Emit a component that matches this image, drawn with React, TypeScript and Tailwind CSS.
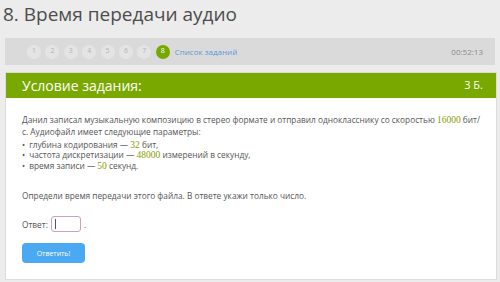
import React from "react";

const font = { fontFamily: '"Open Sans", "Noto Sans", sans-serif' };

function Num({ children }: { children: React.ReactNode }) {
  return <span className="font-['Liberation_Serif',serif] text-[9.5px] leading-none text-[#8a9c00]">{children}</span>;
}

export default function App() {
  const steps = [1, 2, 3, 4, 5, 6, 7];
  return (
    <div className="h-[282px] w-[500px] overflow-hidden bg-[#ececec] font-['Open_Sans',sans-serif] text-[#555]">
      <h1 className="pl-[3px] pt-[1px] text-[19px] leading-[26px] text-[#4d4d4d]">8. Время передачи аудио</h1>

      <div className="mx-[5px] mt-[11px] flex h-[27px] items-center bg-[#dadada] pl-[22px] pr-[12px]">
        <div className="flex items-center gap-[4.4px]">
          {steps.map((n) => (
            <span
              key={n}
              className="flex h-[14px] w-[14px] items-center justify-center rounded-full bg-[#e4e4e4] text-[7px] text-[#b5b5b5]"
            >
              {n}
            </span>
          ))}
          <span className="flex h-[14px] w-[14px] items-center justify-center rounded-full bg-[#76a800] text-[7px] text-white">
            8
          </span>
        </div>
        <span className="ml-[5px] text-[8px] text-[#5b9bd8]">Список заданий</span>
        <span className="ml-auto text-[8px] text-[#8a8a8a]">00:52:13</span>
      </div>

      <div className="mx-[5px] mt-[7px] mr-[3px] border border-[#dcdcdc] bg-white">
        <div className="flex h-[25px] items-center bg-[#79a900] pl-[16px] pr-[13px] text-white">
          <span className="text-[14px]">Условие задания:</span>
          <span className="ml-auto text-[11px]">3 Б.</span>
        </div>
        <div className="h-[181px] pl-[16px] pr-[10px] pt-[16px] text-[8.3px] leading-[11px] text-[#555]" style={font}>
          <p>
            Данил записал музыкальную композицию в стерео формате и отправил однокласснику со скоростью <Num>16000</Num>&nbsp;бит/
            <br />
            с. Аудиофайл имеет следующие параметры:
          </p>
          <ul className="mt-[3px] leading-[9px]">
            <li className="flex gap-[4px]">
              <span>•</span>
              <span>
                глубина кодирования — <Num>32</Num> бит,
              </span>
            </li>
            <li className="flex gap-[4px]">
              <span>•</span>
              <span>
                частота дискретизации — <Num>48000</Num> измерений в секунду,
              </span>
            </li>
            <li className="flex gap-[4px]">
              <span>•</span>
              <span>
                время записи — <Num>50</Num> секунд.
              </span>
            </li>
          </ul>
          <p className="mt-[19px]">Определи время передачи этого файла. В ответе укажи только число.</p>
          <div className="mt-[15px] flex items-center gap-[3px]">
            <span>Ответ:</span>
            <span className="flex h-[16px] w-[30px] items-center rounded-[3px] border border-[#c9a3c0] pl-[3px]">
              <span className="h-[10px] w-px bg-[#555]" />
            </span>
            <span>.</span>
          </div>
          <button className="mt-[11px] flex h-[20px] w-[63px] items-center justify-center rounded-[4px] bg-[#4aa9f0] text-[7px] text-white">
            Ответить!
          </button>
        </div>
      </div>
    </div>
  );
}
